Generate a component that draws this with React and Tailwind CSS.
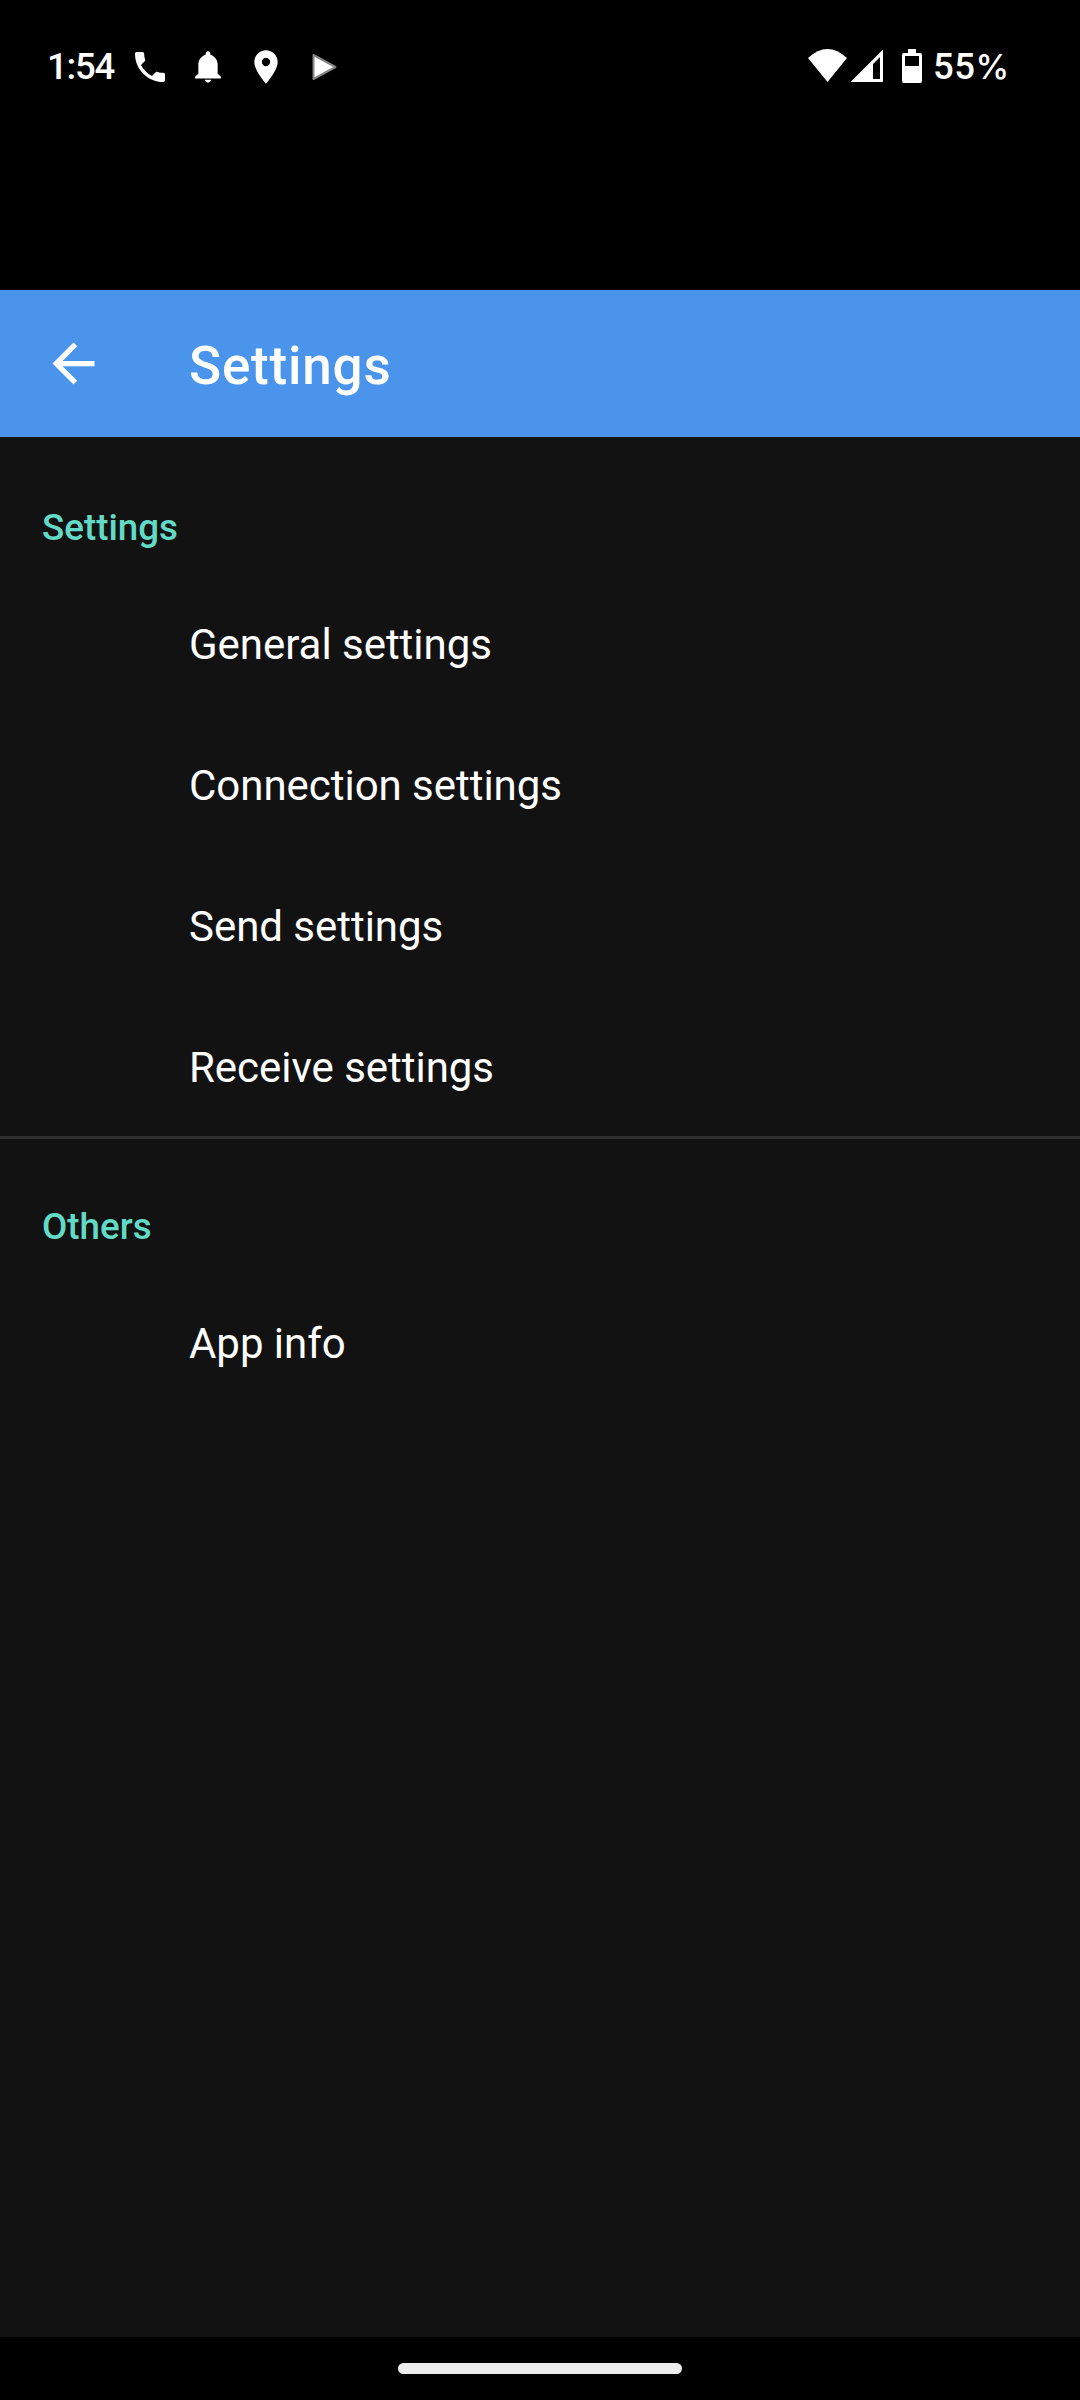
const sections = [
  {
    title: 'Settings',
    items: ['General settings', 'Connection settings', 'Send settings', 'Receive settings'],
  },
  { title: 'Others', items: ['App info'] },
];

function StatusBar() {
  return (
    <div className="flex h-[290px] items-start justify-between bg-black pl-[47px] pt-[46px] text-white">
      <div className="flex h-[42px] items-center">
        <span className="w-[83px] text-[36.5px] font-medium leading-[42px] tracking-[-1.2px]">1:54</span>
        <svg className="size-[40px]" viewBox="0 0 24 24" fill="currentColor">
          <path d="M20 21c.55 0 1-.45 1-1v-3.49c0-.55-.45-1-1-1-1.24 0-2.45-.2-3.57-.57-.35-.11-.74-.03-1.02.24l-2.2 2.2a15.1 15.1 0 0 1-6.59-6.59l2.2-2.2c.28-.28.36-.67.25-1.02A11.36 11.36 0 0 1 8.5 4c0-.55-.45-1-1-1H4c-.55 0-1 .45-1 1 0 9.39 7.61 17 17 17z" />
        </svg>
        <svg className="ml-[18px] size-[40px]" viewBox="0 0 24 24" fill="currentColor">
          <path d="M4.2 18.9v-1l2-1.8v-5.6c0-2.7 1.7-5 4.4-5.8V4a1.4 1.4 0 0 1 2.8 0v.7c2.7.8 4.4 3.1 4.4 5.8v5.6l2 1.8v1zM10.2 19.7h3.6c0 .9-.8 1.7-1.8 1.7s-1.8-.8-1.8-1.7z" />
        </svg>
        <svg className="ml-[18px] size-[40px]" viewBox="0 0 24 24" fill="currentColor">
          <path d="M12 2C8.13 2 5 5.13 5 9c0 5.25 7 13 7 13s7-7.75 7-13c0-3.87-3.13-7-7-7zm0 9.5a2.5 2.5 0 1 1 0-5 2.5 2.5 0 0 1 0 5z" />
        </svg>
        <svg className="ml-[18px] h-[42px] w-[40px]" viewBox="0 0 40 42">
          <path d="M9.5 9v24L31.5 21z" fill="#fff" stroke="#858585" strokeWidth="2" strokeLinejoin="round" />
        </svg>
      </div>
      <div className="flex h-[42px] w-[272px] items-center">
        <svg className="h-[42px] w-[125px]" viewBox="0 0 125 42" fill="currentColor">
          <path d="M0 12Q19.5-6 39 12L19.5 36z" />
          <path fillRule="evenodd" d="M42.5 36L75 3.5V36zM65 33h7V11l-7 7z" />
          <path fillRule="evenodd" d="M100 3h8v4h4a2 2 0 0 1 2 2v26a2 2 0 0 1-2 2H96a2 2 0 0 1-2-2V9a2 2 0 0 1 2-2h4zM97 10v10h14V10z" />
        </svg>
        <span className="text-[36.5px] font-medium leading-[42px] tracking-[0.5px]">
          55<span className="font-['Inter'] text-[34px] tracking-normal">%</span>
        </span>
      </div>
    </div>
  );
}

function AppBar() {
  return (
    <header className="flex h-[147px] items-center bg-[#4a94ec] pl-[42px] text-white">
      <svg className="mr-[84px] size-[63px]" viewBox="0 0 24 24" fill="currentColor">
        <path d="M20 11H7.83l5.59-5.59L12 4l-8 8 8 8 1.41-1.41L7.83 13H20v-2z" />
      </svg>
      <h1 className="pt-[4px] text-[53px] font-medium leading-[62px] tracking-[0.8px]">Settings</h1>
    </header>
  );
}

function Section({ title, items }) {
  return (
    <section>
      <h2 className="h-[135px] pl-[42px] pt-[69px] text-[36.75px] font-medium leading-[43px] text-[#62dac5]">{title}</h2>
      <ul>
        {items.map((item) => (
          <li key={item} className="flex h-[141px] items-center pl-[189px] pt-[4px] text-[42px] tracking-[-0.03px] text-white">
            {item}
          </li>
        ))}
      </ul>
    </section>
  );
}

export default function App() {
  return (
    <div className="flex h-[2400px] w-[1080px] flex-col bg-black font-['Roboto',sans-serif]">
      <StatusBar />
      <AppBar />
      <main className="flex-1 bg-[#121212]">
        <Section {...sections[0]} />
        <div className="-mb-[3px] h-[3px] bg-[#303030]" />
        <Section {...sections[1]} />
      </main>
      <nav className="flex h-[63px] justify-center pt-[26px]">
        <div className="h-[11px] w-[284px] rounded-full bg-[#ececec]" />
      </nav>
    </div>
  );
}
